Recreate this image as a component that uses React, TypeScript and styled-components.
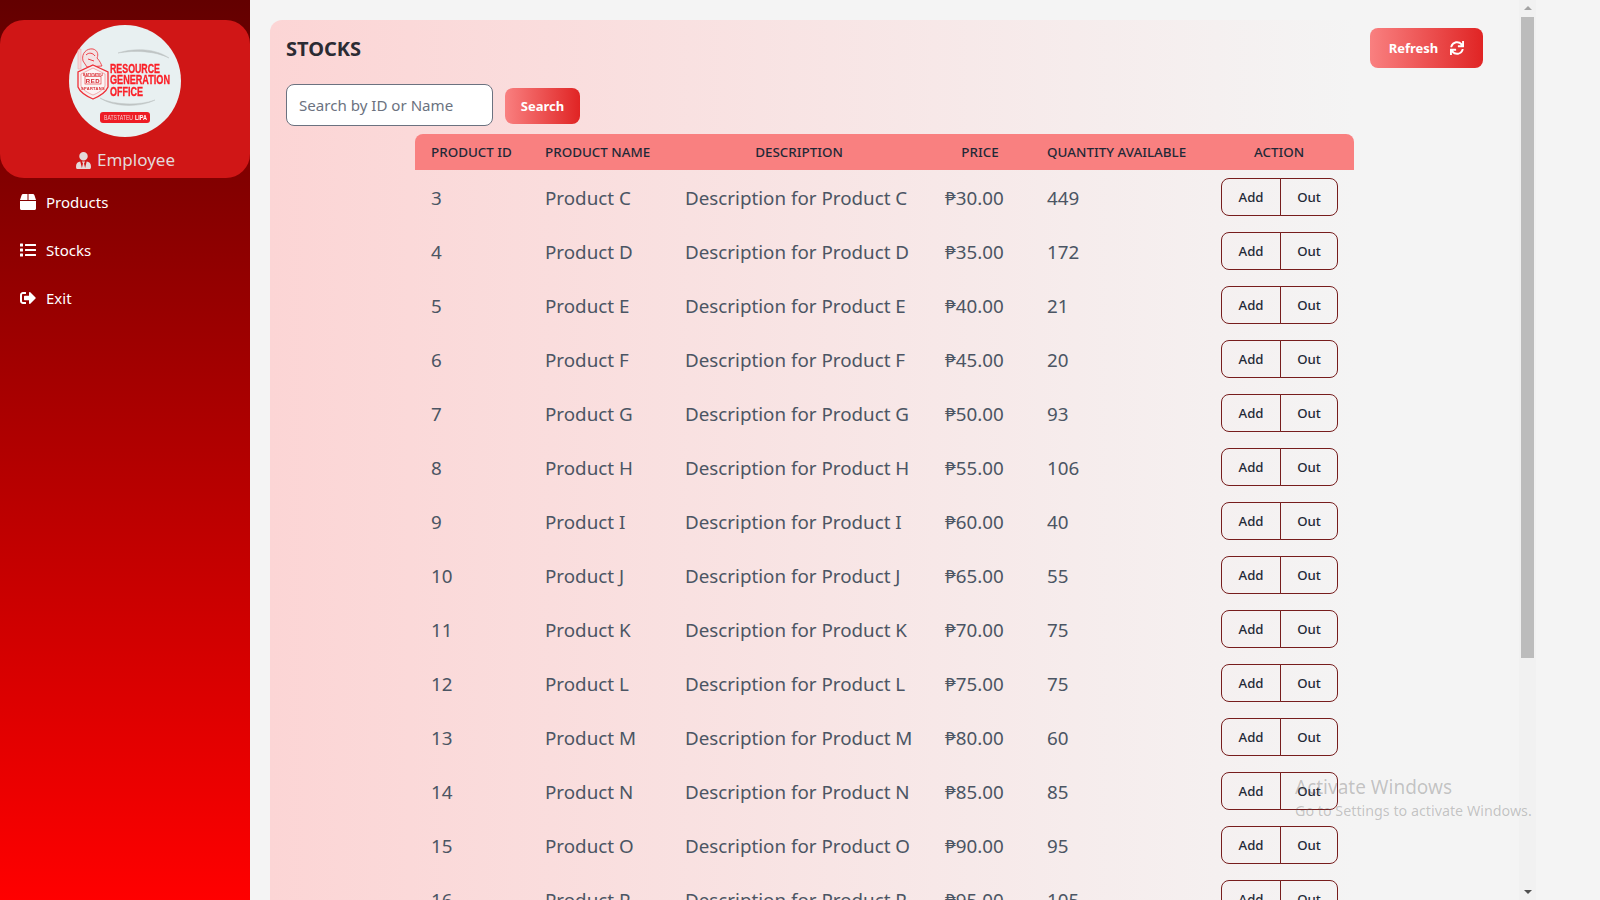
import React from 'react';
import styled, { createGlobalStyle } from 'styled-components';
import { FaBox, FaList, FaSignOutAlt, FaSync, FaUserTie } from 'react-icons/fa';

const GlobalStyle = createGlobalStyle`
  html, body {
    margin: 0;
    height: 100%;
    overflow: hidden;
    background: #f4f4f4;
  }
  * { box-sizing: border-box; }
`;

const fontStack = `'Noto Sans', 'Open Sans', sans-serif`;

const rows = [
  { id: 3, letter: 'C', price: 30, qty: 449 },
  { id: 4, letter: 'D', price: 35, qty: 172 },
  { id: 5, letter: 'E', price: 40, qty: 21 },
  { id: 6, letter: 'F', price: 45, qty: 20 },
  { id: 7, letter: 'G', price: 50, qty: 93 },
  { id: 8, letter: 'H', price: 55, qty: 106 },
  { id: 9, letter: 'I', price: 60, qty: 40 },
  { id: 10, letter: 'J', price: 65, qty: 55 },
  { id: 11, letter: 'K', price: 70, qty: 75 },
  { id: 12, letter: 'L', price: 75, qty: 75 },
  { id: 13, letter: 'M', price: 80, qty: 60 },
  { id: 14, letter: 'N', price: 85, qty: 85 },
  { id: 15, letter: 'O', price: 90, qty: 95 },
  { id: 16, letter: 'P', price: 95, qty: 105 },
];

const logoFont = `'Liberation Sans Narrow', 'Liberation Sans', sans-serif`;

const Logo = () => (
  <svg width="112" height="112" viewBox="0 0 112 112">
    <circle cx="56" cy="56" r="56" fill="#e8f0f1" />
    {/* swooshes behind the wordmark */}
    <path d="M49 28 C64 23 86 23 100 33 C86 26 66 25 49 28 Z" fill="#bfc4c4" stroke="#bfc4c4" strokeWidth="0.5" />
    <path d="M31 73 C44 80 70 81 86 75 C70 83 44 82 31 73 Z" fill="#bfc4c4" stroke="#bfc4c4" strokeWidth="0.5" />
    {/* mascot */}
    <path d="M9 25 L12 24 L12 44 L9 44 Z" fill="#f6d9da" stroke="#f3a5a8" strokeWidth="0.6" />
    <path d="M14 36 C12 28 18 23 24 24 C28 25 30 29 28 33 C31 36 32 39 33 41 L18 42 Z" fill="#f2e3e4" stroke="#ee3b42" strokeWidth="0.9" />
    <path d="M17 30 C20 27 24 28 26 31 M19 34 L25 36" fill="none" stroke="#ee3b42" strokeWidth="1" />
    {/* shield */}
    <path d="M24 40 L39 47 L39 62 C37 67 31 71 24 74 C17 71 11 67 9 62 L9 47 Z" fill="#f6eeee" stroke="#ee2f37" strokeWidth="1.3" />
    <path d="M24 43 L36 49 L36 61 C34 65 29 68 24 70 C19 68 14 65 12 61 L12 49 Z" fill="#fbf5f5" stroke="#f07a7f" strokeWidth="0.6" />
    <text x="24" y="50.5" textAnchor="middle" fontFamily={logoFont} fontSize="3.4" fontWeight="700" fill="#d92a31">BATSTATEU</text>
    <rect x="16" y="51.5" width="16" height="7.5" fill="none" stroke="#e5252b" strokeWidth="0.6" />
    <text x="24" y="57.7" textAnchor="middle" fontFamily={logoFont} fontSize="6" fontWeight="700" fill="#d4202a" letterSpacing="0.6">RED</text>
    <text x="24" y="64.5" textAnchor="middle" fontFamily={logoFont} fontSize="4" fontWeight="700" fill="#d92a31" letterSpacing="0.3">SPARTANS</text>
    {/* wordmark */}
    <g fontFamily={logoFont} fontWeight="700" fill="#fb1e26" stroke="#fb1e26" strokeWidth="0.35" fontSize="13">
      <text x="41" y="47.5" textLength="50" lengthAdjust="spacingAndGlyphs">RESOURCE</text>
      <text x="41" y="59" textLength="60" lengthAdjust="spacingAndGlyphs">GENERATION</text>
      <text x="41" y="70.5" textLength="33" lengthAdjust="spacingAndGlyphs">OFFICE</text>
    </g>
    <rect x="31" y="87" width="50" height="11" rx="3" fill="#ee1c25" />
    <text x="35" y="95" fontFamily={logoFont} fontSize="7" fill="#f6c9cb" textLength="29" lengthAdjust="spacingAndGlyphs">BATSTATEU</text>
    <text x="66" y="95" fontFamily={logoFont} fontSize="7" fontWeight="700" fill="#fff" textLength="12" lengthAdjust="spacingAndGlyphs">LIPA</text>
  </svg>
);

const App = () => (
  <Page>
    <GlobalStyle />
    <Sidebar>
      <Profile>
        <LogoWrap><Logo /></LogoWrap>
        <Role><FaUserTie size={17} />Employee</Role>
      </Profile>
      <Nav>
        <NavItem><FaBox size={16} />Products</NavItem>
        <NavItem><FaList size={16} />Stocks</NavItem>
        <NavItem><FaSignOutAlt size={16} />Exit</NavItem>
      </Nav>
    </Sidebar>
    <Content>
      <Card>
        <Title>STOCKS</Title>
        <SearchRow>
          <SearchInput placeholder="Search by ID or Name" />
          <SearchButton>Search</SearchButton>
        </SearchRow>
        <Table>
          <thead>
            <tr>
              <HeadCell $w={114}>PRODUCT ID</HeadCell>
              <HeadCell $w={140}>PRODUCT NAME</HeadCell>
              <HeadCell $w={260} $center>DESCRIPTION</HeadCell>
              <HeadCell $w={102} $center>PRICE</HeadCell>
              <HeadCell $w={173}>QUANTITY AVAILABLE</HeadCell>
              <HeadCell $center>ACTION</HeadCell>
            </tr>
          </thead>
          <tbody>
            {rows.map((r) => (
              <tr key={r.id}>
                <Cell>{r.id}</Cell>
                <Cell>Product {r.letter}</Cell>
                <Cell>Description for Product {r.letter}</Cell>
                <Cell>₱{r.price}.00</Cell>
                <Cell>{r.qty}</Cell>
                <ActionCell>
                  <ActionGroup>
                    <AddButton>Add</AddButton>
                    <OutButton>Out</OutButton>
                  </ActionGroup>
                </ActionCell>
              </tr>
            ))}
          </tbody>
        </Table>
      </Card>
      <RefreshSlot>
        <RefreshButton>Refresh <FaSync size={14} /></RefreshButton>
      </RefreshSlot>
    </Content>
    <Scrollbar>
      <ArrowUp />
      <Thumb />
      <ArrowDown />
    </Scrollbar>
    <Watermark>
      <strong>Activate Windows</strong>
      <span>Go to Settings to activate Windows.</span>
    </Watermark>
  </Page>
);

export default App;

const Page = styled.div`
  position: relative;
  display: flex;
  height: 900px;
  overflow: hidden;
  font-family: ${fontStack};
  background: #f4f4f4;
`;

const Sidebar = styled.aside`
  width: 250px;
  flex: none;
  padding-top: 20px;
  background: linear-gradient(to bottom, #630000, #ff0000);
`;

const Profile = styled.div`
  height: 158px;
  padding-top: 5px;
  border-radius: 24px;
  background: #d01616;
  display: flex;
  flex-direction: column;
  align-items: center;
`;

const LogoWrap = styled.div`
  height: 112px;
  filter: blur(0.4px);
`;

const Role = styled.div`
  margin-top: 11px;
  display: flex;
  align-items: center;
  gap: 5px;
  font-size: 17px;
  line-height: 24px;
  color: #e4d9d9;
`;

const Nav = styled.nav`
  padding-top: 0;
`;

const NavItem = styled.a`
  height: 48px;
  padding-left: 20px;
  display: flex;
  align-items: center;
  gap: 10px;
  font-size: 15px;
  color: #fff;
`;

const Content = styled.main`
  width: 1269px;
  flex: none;
  padding: 20px 0 0 20px;
  display: flex;
  align-items: flex-start;
  overflow: hidden;
`;

const Card = styled.section`
  width: 1085px;
  flex: none;
  min-height: 1000px;
  padding: 17px 16px 16px;
  border-radius: 12px 0 0 0;
  background: linear-gradient(to right, #fcd5d5, #f4f4f4);
`;

const Title = styled.h1`
  margin: 0;
  font-size: 20px;
  line-height: 24px;
  font-weight: 700;
  color: #2b2b33;
`;

const SearchRow = styled.div`
  margin-top: 23px;
  display: flex;
  align-items: center;
  gap: 12px;
`;

const SearchInput = styled.input`
  width: 207px;
  height: 42px;
  padding: 0 12px;
  border: 1px solid #6b7280;
  border-radius: 8px;
  background: #fff;
  font-family: ${fontStack};
  font-size: 15.1px;
  outline: none;

  &::placeholder {
    color: #6b7280;
    opacity: 1;
  }
`;

const GradientButton = styled.button`
  display: flex;
  align-items: center;
  justify-content: center;
  border: none;
  border-radius: 8px;
  background: linear-gradient(to right, #f98080, #e02424);
  font-family: ${fontStack};
  font-size: 13px;
  font-weight: 700;
  color: #fff;
`;

const SearchButton = styled(GradientButton)`
  width: 75px;
  height: 36px;
  margin-top: 2px;
`;

const RefreshButton = styled(GradientButton)`
  width: 113px;
  height: 40px;
  gap: 12px;
`;

const Table = styled.table`
  margin: 8px 0 0 129px;
  width: 939px;
  border-collapse: collapse;
  table-layout: fixed;
`;

const HeadCell = styled.th<{ $w?: number; $center?: boolean }>`
  width: ${({ $w }) => ($w ? `${$w}px` : 'auto')};
  height: 36px;
  padding: 0 16px;
  background: #f98080;
  text-align: ${({ $center }) => ($center ? 'center' : 'left')};
  font-size: 13.4px;
  font-weight: 500;
  white-space: nowrap;
  color: #1f2937;

  &:first-child { border-top-left-radius: 8px; }
  &:last-child { border-top-right-radius: 8px; }
`;

const Cell = styled.td`
  height: 54px;
  padding: 2px 16px 0;
  font-size: 18.8px;
  white-space: nowrap;
  color: #4b5563;
`;

const ActionCell = styled(Cell)`
  padding: 0 16px;
`;

const ActionGroup = styled.div`
  display: flex;
  justify-content: flex-end;
`;

const ActionButton = styled.button`
  height: 38px;
  padding: 0 0 1px;
  border: 1px solid #771d1d;
  background: transparent;
  font-family: ${fontStack};
  font-size: 13.2px;
  font-weight: 500;
  color: #1f2937;
`;

const AddButton = styled(ActionButton)`
  width: 60px;
  border-radius: 8px 0 0 8px;
`;

const OutButton = styled(ActionButton)`
  width: 58px;
  margin-left: -1px;
  border-radius: 0 8px 8px 0;
`;

const RefreshSlot = styled.div`
  margin: 8px 0 0 15px;
`;

const Watermark = styled.div`
  position: absolute;
  left: 1295px;
  top: 774px;
  display: flex;
  flex-direction: column;
  color: rgba(90, 90, 90, 0.33);
  pointer-events: none;
  white-space: nowrap;

  strong {
    font-size: 19px;
    font-weight: 400;
    line-height: 27px;
  }
  span {
    font-size: 14.3px;
    line-height: 20px;
  }
`;

const Scrollbar = styled.div`
  position: relative;
  width: 17px;
  height: 900px;
  flex: none;
  padding: 17px 2px;
  background: #f1f1f1;
`;

const Thumb = styled.div`
  width: 13px;
  height: 641px;
  background: #bcbcbc;
`;

const ArrowUp = styled.div`
  position: absolute;
  top: 6px;
  left: 5px;
  border: 4px solid transparent;
  border-top: none;
  border-bottom: 4px solid #a3a3a3;
`;

const ArrowDown = styled.div`
  position: absolute;
  bottom: 6px;
  left: 5px;
  border: 4px solid transparent;
  border-bottom: none;
  border-top: 4px solid #505050;
`;
